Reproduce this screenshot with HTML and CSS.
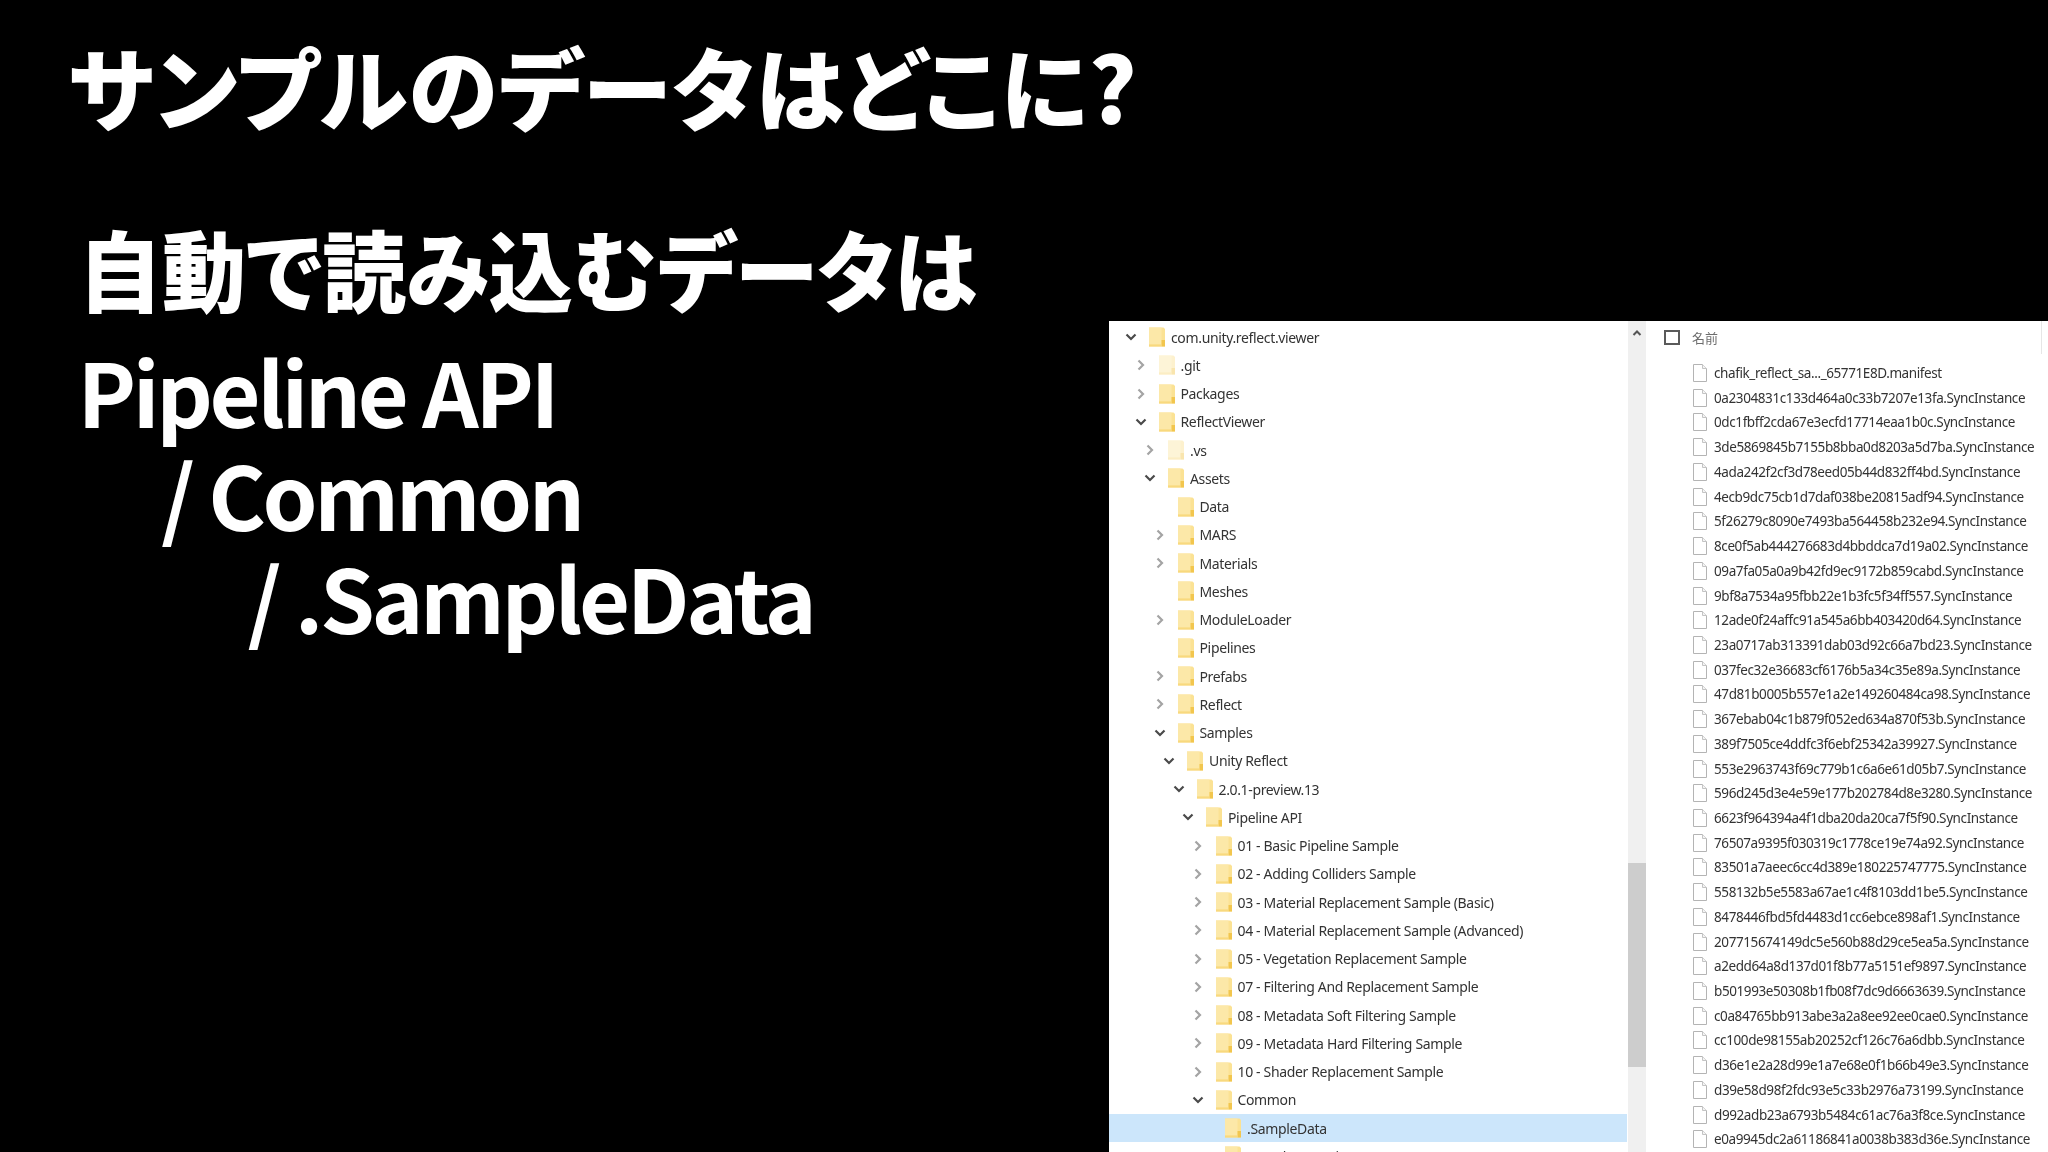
FILE: index.html
```html
<!DOCTYPE html>
<html lang="ja">
<head>
<meta charset="utf-8">
<title>サンプルのデータはどこに?</title>
<link rel="stylesheet" href="styles.css">
</head>
<body>
<svg class="defs" width="0" height="0" aria-hidden="true">
  <symbol id="folder" viewBox="0 0 16 20">
    <path d="M0 .5h14.500L16 2v17.500H0z" fill="#fbe294"/>
    <path d="M0 .5h12.500v17H0z" fill="#fce8a8"/>
    <path d="M12.500 13H16v6.500h-3.500z" fill="#f2c64e"/>
    <path d="M0 17.500h12.500v2H0z" fill="#f8d97e"/>
  </symbol>
  <symbol id="open" viewBox="0 0 16 16">
    <path d="M3.500 5.500L8 10l4.500-4.500" fill="none" stroke="#4a4a4a" stroke-width="2.200"/>
  </symbol>
  <symbol id="closed" viewBox="0 0 16 16">
    <path d="M5.500 3.500L10 8l-4.500 4.500" fill="none" stroke="#a4a4a4" stroke-width="2.200"/>
  </symbol>
  <symbol id="file" viewBox="0 0 14 18">
    <path d="M.5.500h9l4 4v13H.5z" fill="#fff" stroke="#b4b4b4"/>
    <path d="M9.500.500v4h4" fill="#f4f4f4" stroke="#c4c4c4"/>
  </symbol>
</svg>
<main class="slide">
  <section class="copy">
    <h1 class="title">サンプルのデータはどこに?</h1>
    <h2 class="lead">自動で読み込むデータは</h2>
    <p class="path">Pipeline API</p>
    <p class="path path-2">/ Common</p>
    <p class="path path-3">/ .SampleData</p>
  </section>
  <section class="explorer">
    <div class="tree">
      <div class="row l0"><svg class="chev"><use href="#open"/></svg><svg class="folder"><use href="#folder"/></svg><span>com.unity.reflect.viewer</span></div>
      <div class="row l1 hidden"><svg class="chev"><use href="#closed"/></svg><svg class="folder"><use href="#folder"/></svg><span>.git</span></div>
      <div class="row l1"><svg class="chev"><use href="#closed"/></svg><svg class="folder"><use href="#folder"/></svg><span>Packages</span></div>
      <div class="row l1"><svg class="chev"><use href="#open"/></svg><svg class="folder"><use href="#folder"/></svg><span>ReflectViewer</span></div>
      <div class="row l2 hidden"><svg class="chev"><use href="#closed"/></svg><svg class="folder"><use href="#folder"/></svg><span>.vs</span></div>
      <div class="row l2"><svg class="chev"><use href="#open"/></svg><svg class="folder"><use href="#folder"/></svg><span>Assets</span></div>
      <div class="row l3"><i class="chev"></i><svg class="folder"><use href="#folder"/></svg><span>Data</span></div>
      <div class="row l3"><svg class="chev"><use href="#closed"/></svg><svg class="folder"><use href="#folder"/></svg><span>MARS</span></div>
      <div class="row l3"><svg class="chev"><use href="#closed"/></svg><svg class="folder"><use href="#folder"/></svg><span>Materials</span></div>
      <div class="row l3"><i class="chev"></i><svg class="folder"><use href="#folder"/></svg><span>Meshes</span></div>
      <div class="row l3"><svg class="chev"><use href="#closed"/></svg><svg class="folder"><use href="#folder"/></svg><span>ModuleLoader</span></div>
      <div class="row l3"><i class="chev"></i><svg class="folder"><use href="#folder"/></svg><span>Pipelines</span></div>
      <div class="row l3"><svg class="chev"><use href="#closed"/></svg><svg class="folder"><use href="#folder"/></svg><span>Prefabs</span></div>
      <div class="row l3"><svg class="chev"><use href="#closed"/></svg><svg class="folder"><use href="#folder"/></svg><span>Reflect</span></div>
      <div class="row l3"><svg class="chev"><use href="#open"/></svg><svg class="folder"><use href="#folder"/></svg><span>Samples</span></div>
      <div class="row l4"><svg class="chev"><use href="#open"/></svg><svg class="folder"><use href="#folder"/></svg><span>Unity Reflect</span></div>
      <div class="row l5"><svg class="chev"><use href="#open"/></svg><svg class="folder"><use href="#folder"/></svg><span>2.0.1-preview.13</span></div>
      <div class="row l6"><svg class="chev"><use href="#open"/></svg><svg class="folder"><use href="#folder"/></svg><span>Pipeline API</span></div>
      <div class="row l7"><svg class="chev"><use href="#closed"/></svg><svg class="folder"><use href="#folder"/></svg><span>01 - Basic Pipeline Sample</span></div>
      <div class="row l7"><svg class="chev"><use href="#closed"/></svg><svg class="folder"><use href="#folder"/></svg><span>02 - Adding Colliders Sample</span></div>
      <div class="row l7"><svg class="chev"><use href="#closed"/></svg><svg class="folder"><use href="#folder"/></svg><span>03 - Material Replacement Sample (Basic)</span></div>
      <div class="row l7"><svg class="chev"><use href="#closed"/></svg><svg class="folder"><use href="#folder"/></svg><span>04 - Material Replacement Sample (Advanced)</span></div>
      <div class="row l7"><svg class="chev"><use href="#closed"/></svg><svg class="folder"><use href="#folder"/></svg><span>05 - Vegetation Replacement Sample</span></div>
      <div class="row l7"><svg class="chev"><use href="#closed"/></svg><svg class="folder"><use href="#folder"/></svg><span>07 - Filtering And Replacement Sample</span></div>
      <div class="row l7"><svg class="chev"><use href="#closed"/></svg><svg class="folder"><use href="#folder"/></svg><span>08 - Metadata Soft Filtering Sample</span></div>
      <div class="row l7"><svg class="chev"><use href="#closed"/></svg><svg class="folder"><use href="#folder"/></svg><span>09 - Metadata Hard Filtering Sample</span></div>
      <div class="row l7"><svg class="chev"><use href="#closed"/></svg><svg class="folder"><use href="#folder"/></svg><span>10 - Shader Replacement Sample</span></div>
      <div class="row l7"><svg class="chev"><use href="#open"/></svg><svg class="folder"><use href="#folder"/></svg><span>Common</span></div>
      <div class="row l8 selected"><i class="chev"></i><svg class="folder"><use href="#folder"/></svg><span>.SampleData</span></div>
      <div class="row l8"><i class="chev"></i><svg class="folder"><use href="#folder"/></svg><span>SampleData/Ti</span></div>
    </div>
    <div class="scrollbar">
      <svg class="scroll-up" viewBox="0 0 18 12"><path d="M5.500 8L9 4.500 12.500 8" fill="none" stroke="#555" stroke-width="2"/></svg>
      <div class="scroll-thumb"></div>
    </div>
    <div class="files">
      <div class="files-head"><i class="check"></i><span>名前</span></div>
      <div class="file"><svg><use href="#file"/></svg><span>chafik_reflect_sa..._65771E8D.manifest</span></div>
      <div class="file"><svg><use href="#file"/></svg><span>0a2304831c133d464a0c33b7207e13fa.SyncInstance</span></div>
      <div class="file"><svg><use href="#file"/></svg><span>0dc1fbff2cda67e3ecfd17714eaa1b0c.SyncInstance</span></div>
      <div class="file"><svg><use href="#file"/></svg><span>3de5869845b7155b8bba0d8203a5d7ba.SyncInstance</span></div>
      <div class="file"><svg><use href="#file"/></svg><span>4ada242f2cf3d78eed05b44d832ff4bd.SyncInstance</span></div>
      <div class="file"><svg><use href="#file"/></svg><span>4ecb9dc75cb1d7daf038be20815adf94.SyncInstance</span></div>
      <div class="file"><svg><use href="#file"/></svg><span>5f26279c8090e7493ba564458b232e94.SyncInstance</span></div>
      <div class="file"><svg><use href="#file"/></svg><span>8ce0f5ab444276683d4bbddca7d19a02.SyncInstance</span></div>
      <div class="file"><svg><use href="#file"/></svg><span>09a7fa05a0a9b42fd9ec9172b859cabd.SyncInstance</span></div>
      <div class="file"><svg><use href="#file"/></svg><span>9bf8a7534a95fbb22e1b3fc5f34ff557.SyncInstance</span></div>
      <div class="file"><svg><use href="#file"/></svg><span>12ade0f24affc91a545a6bb403420d64.SyncInstance</span></div>
      <div class="file"><svg><use href="#file"/></svg><span>23a0717ab313391dab03d92c66a7bd23.SyncInstance</span></div>
      <div class="file"><svg><use href="#file"/></svg><span>037fec32e36683cf6176b5a34c35e89a.SyncInstance</span></div>
      <div class="file"><svg><use href="#file"/></svg><span>47d81b0005b557e1a2e149260484ca98.SyncInstance</span></div>
      <div class="file"><svg><use href="#file"/></svg><span>367ebab04c1b879f052ed634a870f53b.SyncInstance</span></div>
      <div class="file"><svg><use href="#file"/></svg><span>389f7505ce4ddfc3f6ebf25342a39927.SyncInstance</span></div>
      <div class="file"><svg><use href="#file"/></svg><span>553e2963743f69c779b1c6a6e61d05b7.SyncInstance</span></div>
      <div class="file"><svg><use href="#file"/></svg><span>596d245d3e4e59e177b202784d8e3280.SyncInstance</span></div>
      <div class="file"><svg><use href="#file"/></svg><span>6623f964394a4f1dba20da20ca7f5f90.SyncInstance</span></div>
      <div class="file"><svg><use href="#file"/></svg><span>76507a9395f030319c1778ce19e74a92.SyncInstance</span></div>
      <div class="file"><svg><use href="#file"/></svg><span>83501a7aeec6cc4d389e180225747775.SyncInstance</span></div>
      <div class="file"><svg><use href="#file"/></svg><span>558132b5e5583a67ae1c4f8103dd1be5.SyncInstance</span></div>
      <div class="file"><svg><use href="#file"/></svg><span>8478446fbd5fd4483d1cc6ebce898af1.SyncInstance</span></div>
      <div class="file"><svg><use href="#file"/></svg><span>207715674149dc5e560b88d29ce5ea5a.SyncInstance</span></div>
      <div class="file"><svg><use href="#file"/></svg><span>a2edd64a8d137d01f8b77a5151ef9897.SyncInstance</span></div>
      <div class="file"><svg><use href="#file"/></svg><span>b501993e50308b1fb08f7dc9d6663639.SyncInstance</span></div>
      <div class="file"><svg><use href="#file"/></svg><span>c0a84765bb913abe3a2a8ee92ee0cae0.SyncInstance</span></div>
      <div class="file"><svg><use href="#file"/></svg><span>cc100de98155ab20252cf126c76a6dbb.SyncInstance</span></div>
      <div class="file"><svg><use href="#file"/></svg><span>d36e1e2a28d99e1a7e68e0f1b66b49e3.SyncInstance</span></div>
      <div class="file"><svg><use href="#file"/></svg><span>d39e58d98f2fdc93e5c33b2976a73199.SyncInstance</span></div>
      <div class="file"><svg><use href="#file"/></svg><span>d992adb23a6793b5484c61ac76a3f8ce.SyncInstance</span></div>
      <div class="file"><svg><use href="#file"/></svg><span>e0a9945dc2a61186841a0038b383d36e.SyncInstance</span></div>
    </div>
  </section>
</main>
</body>
</html>
```

FILE: styles.css
```css
* { box-sizing: border-box; }
html, body { margin: 0; height: 100%; background: #000; overflow: hidden; }
.defs { position: absolute; }

.slide {
  display: flex;
  width: 2048px;
  height: 1152px;
  overflow: hidden;
  background: #000;
  font-family: "Noto Sans CJK JP", "Noto Sans", sans-serif;
  color: #fff;
}

.copy { width: 1109px; flex: none; padding: 25px 0 0 68px; }
.title, .lead, .path { margin: 0; white-space: nowrap; font-feature-settings: "palt"; }
.title { font-size: 90px; line-height: 120px; font-weight: 900; letter-spacing: 1px; }
.lead { font-size: 88px; line-height: 120px; font-weight: 900; margin: 62px 0 0 10px; transform: scaleX(0.955); transform-origin: left center; }
.path { font-size: 88px; line-height: 103px; font-weight: 700; margin-left: 9.500px; letter-spacing: -3.400px; }
.path:first-of-type { margin-top: 11px; }
.path-2 { margin-left: 93px; }
.path-3 { margin-left: 179.500px; }

.explorer {
  flex: 1;
  margin-top: 321px;
  height: 831px;
  display: flex;
  background: #fff;
  overflow: hidden;
  font-family: "Noto Sans", sans-serif;
  color: #333;
  filter: blur(0.35px);
}

.tree { width: 518px; flex: none; padding-top: 2px; }
.row { display: flex; align-items: center; height: 28.260px; font-size: 14px; letter-spacing: -0.350px; white-space: nowrap; }
.row .chev { width: 16px; height: 16px; flex: none; margin-right: 10px; }
.row .folder { width: 16px; height: 20px; flex: none; margin-right: 6px; }
.hidden .folder { opacity: 0.45; }
.selected { background: #cce6fb; }
.l0 { padding-left: 14px; }
.l1 { padding-left: 23.500px; }
.l2 { padding-left: 33px; }
.l3 { padding-left: 42.500px; }
.l4 { padding-left: 52px; }
.l5 { padding-left: 61.500px; }
.l6 { padding-left: 71px; }
.l7 { padding-left: 80.500px; }
.l8 { padding-left: 90px; }

.scrollbar { width: 18px; flex: none; margin-left: 1px; background: #f0f0f0; padding-top: 6px; display: flex; flex-direction: column; }
.scroll-up { width: 18px; height: 12px; flex: none; }
.scroll-thumb { height: 204px; margin-top: 524px; background: #cdcdcd; }

.files { flex: 1; min-width: 0; }
.files-head { display: flex; align-items: center; width: 396px; height: 33px; margin-bottom: 6.700px; padding-left: 18px; font-family: "Noto Sans CJK JP", sans-serif; font-size: 13px; color: #6d6d6d; border-right: 1px solid #e6e6e6; }
.check { width: 16px; height: 15px; border: 2px solid #5a5a5a; margin-right: 12px; flex: none; }
.file { display: flex; align-items: center; height: 24.720px; padding-left: 47px; font-size: 13.500px; letter-spacing: -0.400px; white-space: nowrap; }
.file svg { width: 14px; height: 18px; flex: none; margin-right: 7px; }
```
